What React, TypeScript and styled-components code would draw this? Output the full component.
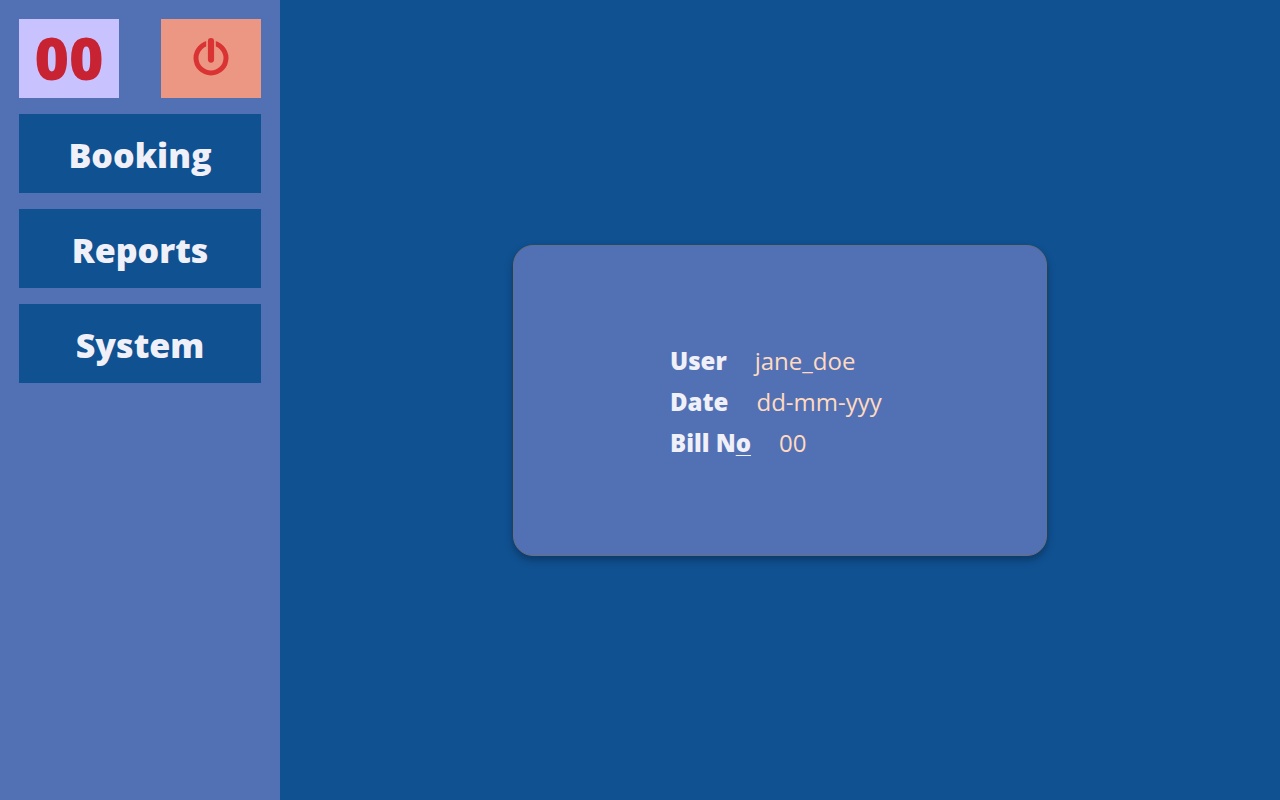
import React from "react";
import styled, { createGlobalStyle } from "styled-components";

const GlobalStyle = createGlobalStyle`
  *, *::before, *::after { box-sizing: border-box; }
  body {
    margin: 0;
    background: #105192;
    color: #f0f0f8;
    font-family: "Segoe UI", "Open Sans", "Noto Sans", sans-serif;
  }
`;

const Page = styled.div`
  display: flex;
  min-height: 100vh;
`;

const Sidebar = styled.aside`
  flex: 0 0 280px;
  display: flex;
  flex-direction: column;
  gap: 16px;
  padding: 19px;
  background: #5271b5;
`;

const TopRow = styled.div`
  display: flex;
  justify-content: space-between;
`;

const Counter = styled.output`
  display: flex;
  align-items: center;
  justify-content: center;
  width: 100px;
  height: 79px;
  background: #c8c3ff;
  color: #c82333;
  font-size: 59px;
  font-weight: 800;
  line-height: 76px;
  padding-bottom: 4px;
`;

const PowerButton = styled.button`
  display: flex;
  align-items: center;
  justify-content: center;
  width: 100px;
  height: 79px;
  padding: 0 0 3px;
  border: 0;
  background: #ec9783;
  color: #d93433;
  cursor: pointer;
`;

const Menu = styled.nav`
  display: flex;
  flex-direction: column;
  gap: 16px;
`;

const MenuButton = styled.button`
  height: 79px;
  padding: 3px 0 0;
  border: 0;
  background: #105192;
  color: inherit;
  font-family: inherit;
  font-size: 34px;
  font-weight: 800;
  cursor: pointer;
`;

const Main = styled.main`
  flex: 1;
  display: flex;
  align-items: center;
  justify-content: center;
`;

const Card = styled.section`
  display: flex;
  align-items: center;
  justify-content: center;
  width: 534px;
  max-width: 100%;
  min-height: 311px;
  padding-top: 2px;
  border: 1px solid #6b6e7c;
  border-radius: 20px;
  background: #5271b5;
  box-shadow: 0 4px 8px rgba(0, 0, 0, 0.3);
`;

const Details = styled.dl`
  min-width: 220px;
  margin: 0;
  font-size: 24px;
  line-height: 41px;
`;

const Detail = styled.div`
  display: flex;
  gap: 28px;
`;

const Label = styled.dt`
  font-weight: 800;
`;

const Value = styled.dd`
  margin: 0;
  color: #ffdac1;
`;

const Underlined = styled.span`
  text-decoration: underline;
  text-decoration-thickness: 1px;
  text-underline-offset: 3px;
`;

const PowerIcon = () => (
  <svg width="36" height="40" viewBox="0 0 36 40" fill="none" stroke="currentColor" aria-hidden="true">
    <circle cx="18" cy="21" r="15" strokeWidth="5" />
    <path d="M18 0V18" stroke="#ec9783" strokeWidth="9.6" />
    <path d="M18 4.2V22.6" strokeWidth="6.2" strokeLinecap="round" />
  </svg>
);

const menuItems = ["Booking", "Reports", "System"];

export default function App() {
  return (
    <>
      <GlobalStyle />
      <Page>
        <Sidebar>
          <TopRow>
            <Counter>00</Counter>
            <PowerButton type="button" aria-label="Power">
              <PowerIcon />
            </PowerButton>
          </TopRow>
          <Menu>
            {menuItems.map((item) => (
              <MenuButton type="button" key={item}>{item}</MenuButton>
            ))}
          </Menu>
        </Sidebar>
        <Main>
          <Card>
            <Details>
              <Detail>
                <Label>User</Label>
                <Value>jane_doe</Value>
              </Detail>
              <Detail>
                <Label>Date</Label>
                <Value>dd-mm-yyy</Value>
              </Detail>
              <Detail>
                <Label>Bill N<Underlined>o</Underlined></Label>
                <Value>00</Value>
              </Detail>
            </Details>
          </Card>
        </Main>
      </Page>
    </>
  );
}
